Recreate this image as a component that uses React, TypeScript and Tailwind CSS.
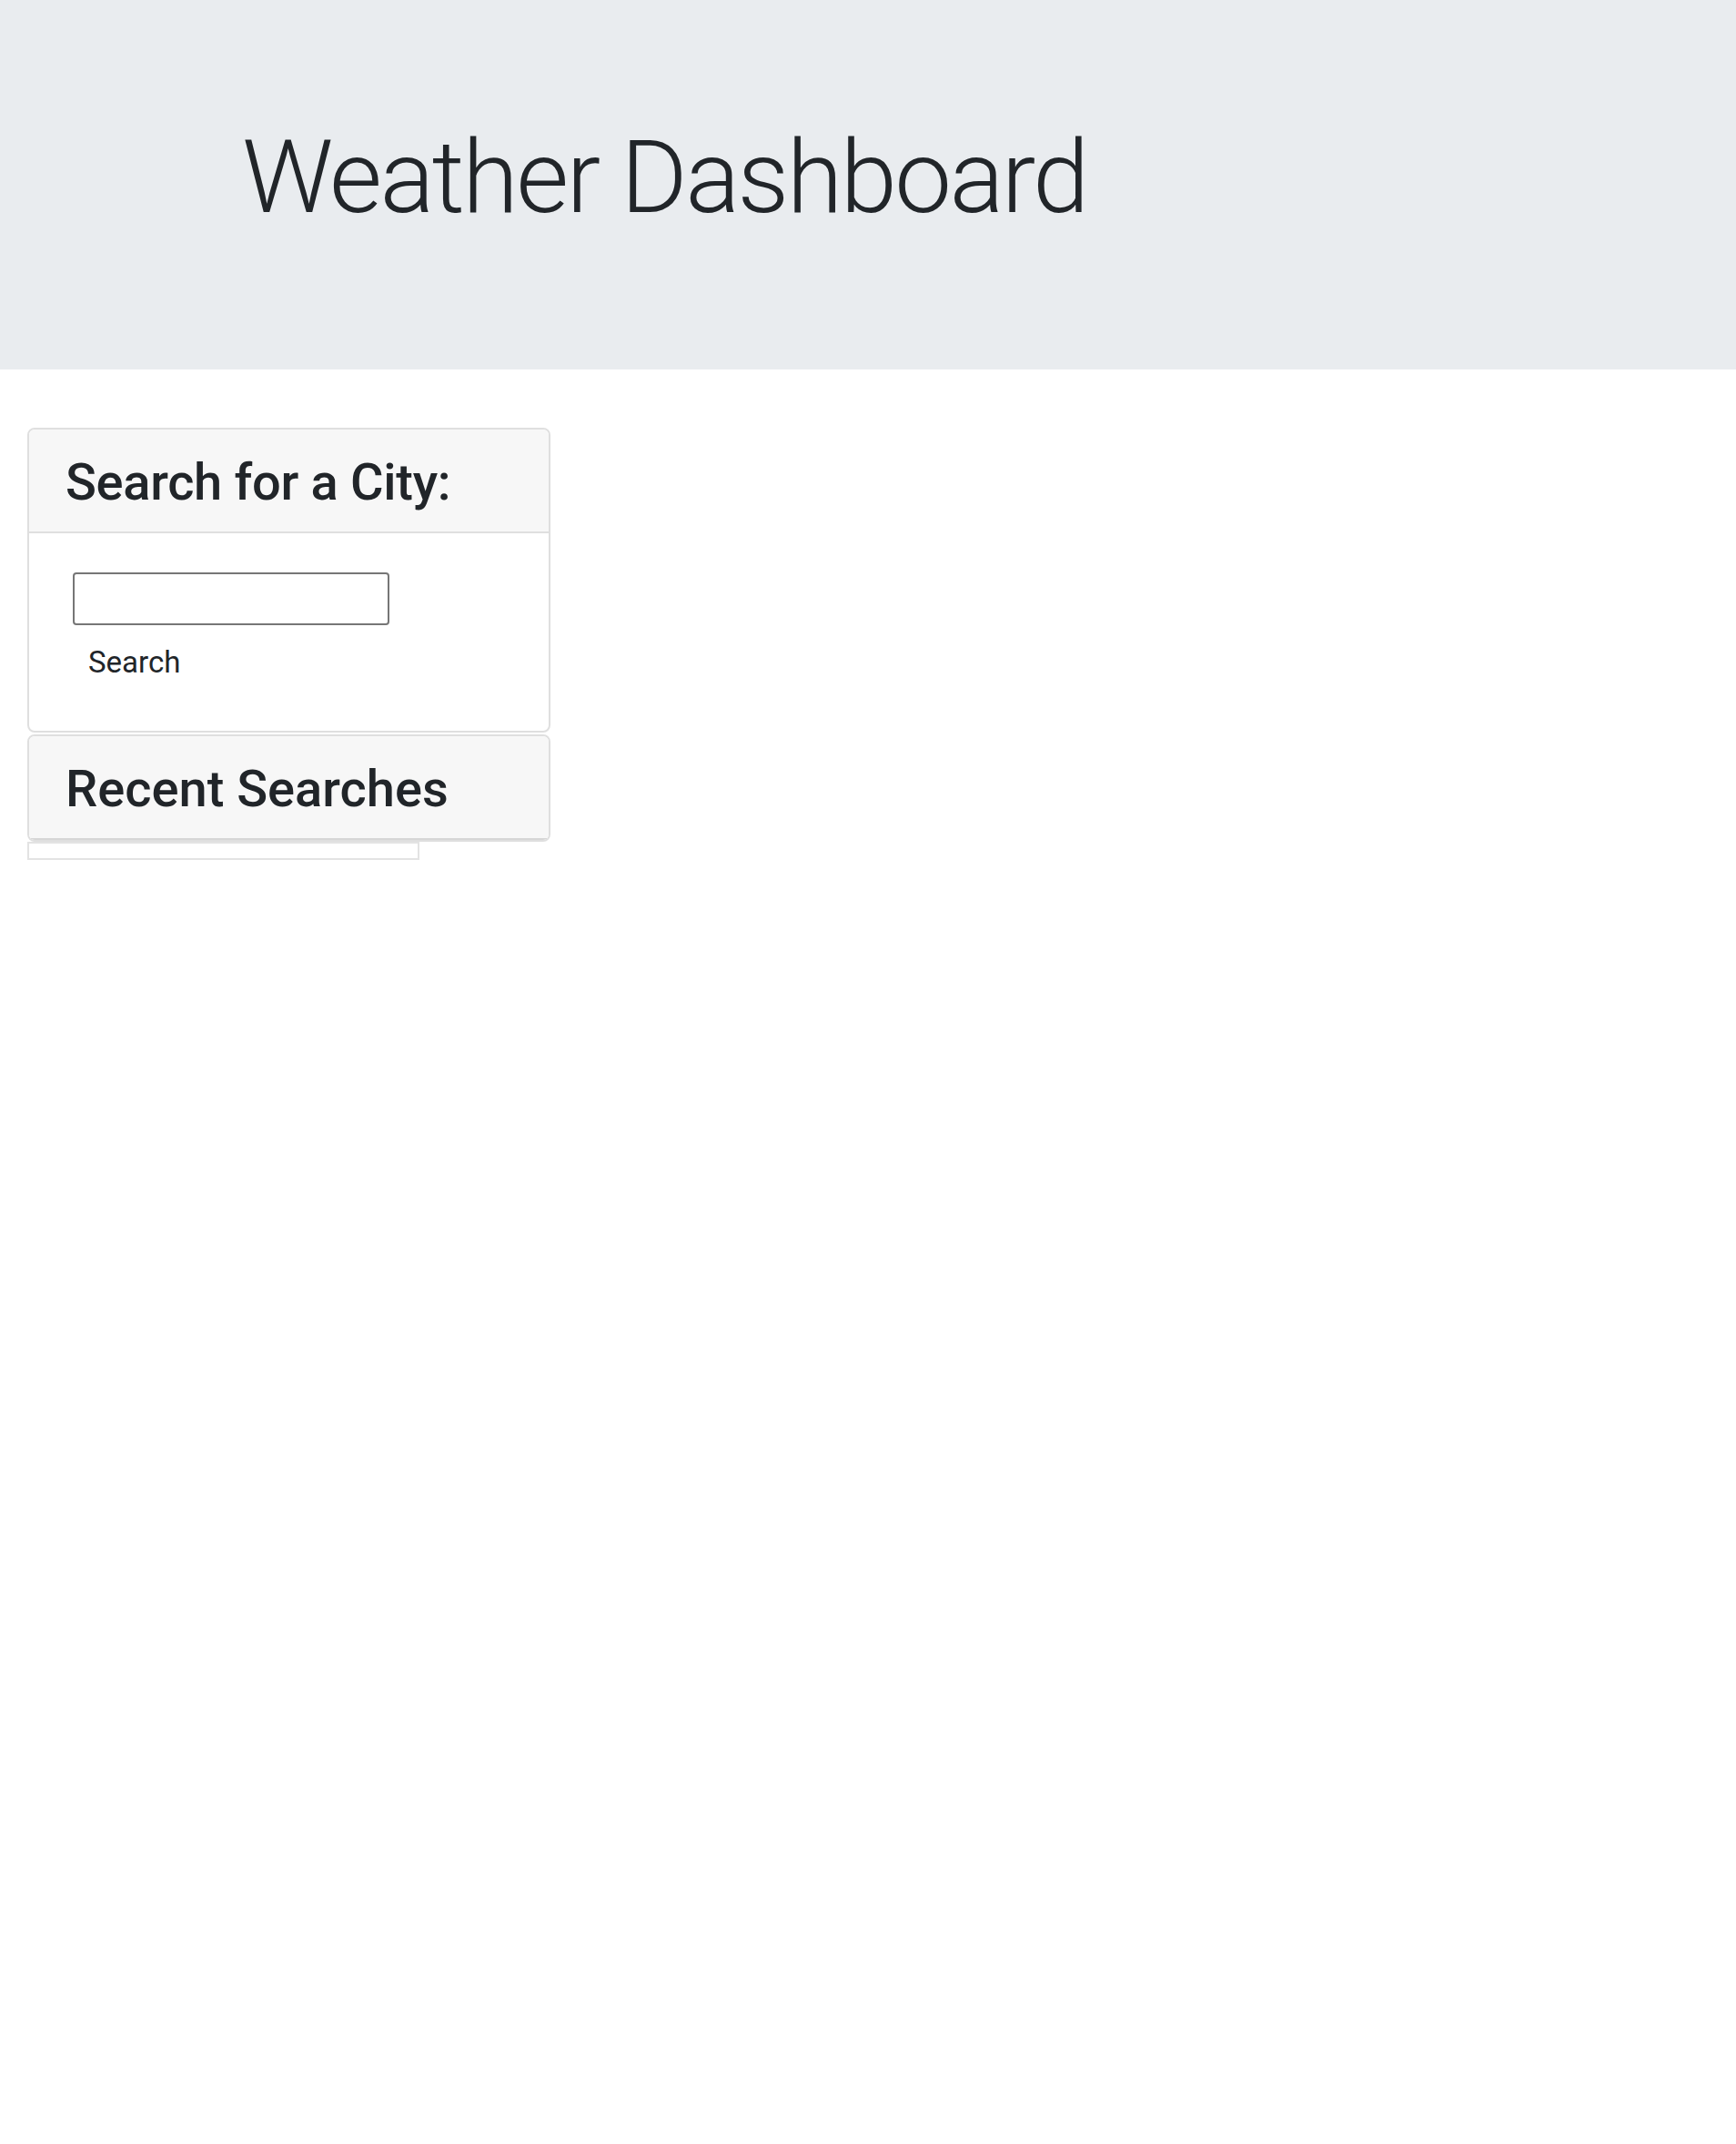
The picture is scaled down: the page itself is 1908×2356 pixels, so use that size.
import { useState } from 'react';

export default function App() {
  const [city, setCity] = useState('');

  return (
    <div className="min-h-[2356px] bg-white text-[#212529] font-['Roboto','Liberation_Sans',sans-serif]">
      {/* Jumbotron */}
      <header className="bg-[#e9ecef] h-[406px] pt-[128px] pl-[266px]">
        <h1 className="text-[112px] leading-[134px] font-light tracking-[-2.6px]">Weather Dashboard</h1>
      </header>

      <div className="px-[30px] pt-[64px]">
        <div className="w-[575px]">
          {/* Search card */}
          <section className="border-2 border-[#dfdfdf] rounded-[8px] overflow-hidden">
            <div className="bg-[#f7f7f7] border-b-2 border-[#dfdfdf] px-[40px] pt-[4px] h-[114px] flex items-center">
              <h3 className="text-[56px] leading-[67px] font-medium tracking-[-0.3px]">Search for a City:</h3>
            </div>
            <div className="px-[40px] pt-[43px] pb-[39px]">
              <input
                value={city}
                onChange={(e) => setCity(e.target.value)}
                className="ml-[8px] block w-[348px] h-[58px] border-2 border-[#767676] rounded-[4px] px-2 text-[32px]"
              />
              <button className="mt-[5px] block px-[25px] py-[12px] text-[33px] leading-[48px] text-[#212529]">
                Search
              </button>
            </div>
          </section>

          {/* Recent searches card */}
          <section className="mt-[2px] border-2 border-[#dfdfdf] rounded-[8px] overflow-hidden">
            <div className="bg-[#f7f7f7] border-b-2 border-[#d6d6d6] px-[40px] pt-[4px] h-[114px] flex items-center">
              <h3 className="text-[56px] leading-[67px] font-medium">Recent Searches</h3>
            </div>
          </section>
          <ul className="w-[431px] h-[20px] border-2 border-[#e3e3e3]"></ul>
        </div>
      </div>
    </div>
  );
}
